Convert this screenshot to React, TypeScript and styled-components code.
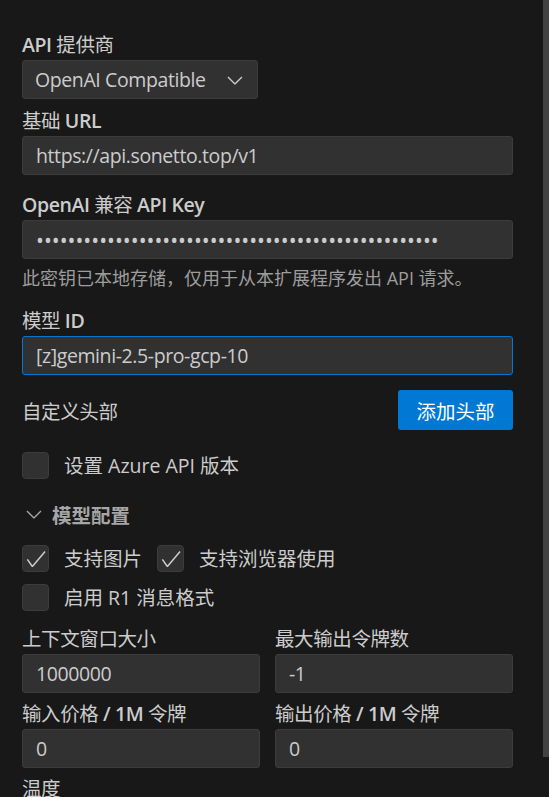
import React from "react";
import styled, { createGlobalStyle } from "styled-components";

// VS Code webview settings panel, dark modern theme at 150% zoom

const GlobalStyle = createGlobalStyle`
  html, body {
    margin: 0;
    background: #181818;
    overflow: hidden;
  }
  body {
    font-family: "Open Sans", "Noto Sans CJK SC", sans-serif;
    color: #cccccc;
  }
  * {
    box-sizing: border-box;
  }
`;

const Page = styled.div`
  position: relative;
  width: 549px;
  min-height: 797px;
  padding: 32px 36px 0 22px;
  font-size: 19.5px;
  letter-spacing: -0.4px;
`;

const ScrollThumb = styled.div`
  position: absolute;
  top: 0;
  right: 0;
  width: 6px;
  height: 757px;
  background: #424242;
`;

const Field = styled.div<{ $mb?: number }>`
  margin-bottom: ${(p) => p.$mb ?? 0}px;
`;

const Label = styled.label`
  display: block;
  font-size: 19.5px;
  line-height: 26px;
  font-weight: 600;
  margin-bottom: 2px;
  color: #cccccc;
  white-space: nowrap;
`;

const Han = styled.span`
  font-weight: 400;
`;

const TextInput = styled.input<{ $focused?: boolean }>`
  display: block;
  width: 100%;
  height: 39px;
  padding: 0 13px;
  background: #313131;
  border: 1px solid ${(p) => (p.$focused ? "#0078d4" : "#3c3c3c")};
  border-radius: 3px;
  color: #cccccc;
  font-family: inherit;
  font-size: 19.5px;
  letter-spacing: inherit;
  outline: none;
`;

const SecretInput = styled(TextInput)`
  font-size: 21px;
  letter-spacing: 0;
`;

const Select = styled.div`
  display: flex;
  align-items: center;
  justify-content: space-between;
  width: 236px;
  height: 39px;
  padding: 0 10px 0 12px;
  background: #313131;
  border: 1px solid #3c3c3c;
  border-radius: 3px;
  color: #cccccc;
`;

const Helper = styled.p`
  margin: 8px 0 19px;
  font-size: 18px;
  line-height: 22px;
  letter-spacing: 0;
  color: #9d9d9d;
  white-space: nowrap;
`;

const HeaderRow = styled.div`
  display: flex;
  align-items: center;
  justify-content: space-between;
  margin: 15px 0 22px;
`;

const PrimaryButton = styled.button`
  width: 115px;
  height: 40px;
  border: none;
  border-radius: 3px;
  background: #0078d4;
  color: #ffffff;
  font-family: inherit;
  font-size: 19.5px;
`;

const CheckRow = styled.div<{ $mb?: number }>`
  display: flex;
  align-items: center;
  margin-bottom: ${(p) => p.$mb ?? 0}px;
`;

const CheckItem = styled.label`
  display: flex;
  align-items: center;
  gap: 15px;
  margin-right: 15px;
  line-height: 27px;
  letter-spacing: 0;
  white-space: nowrap;
`;

const Box = styled.span`
  display: flex;
  align-items: center;
  justify-content: center;
  width: 27px;
  height: 27px;
  background: #313131;
  border: 1px solid #3c3c3c;
  border-radius: 4px;
  color: #cccccc;
`;

const SectionHeading = styled.div`
  display: flex;
  align-items: center;
  gap: 6px;
  height: 26px;
  margin-bottom: 18px;
  font-weight: 700;
  letter-spacing: 0;
  color: #a6a6a6;
`;

const Grid = styled.div`
  display: grid;
  grid-template-columns: 1fr 1fr;
  column-gap: 15px;
  row-gap: 8px;
  margin-top: 15px;
`;

const GridBottom = styled.div`
  margin-top: 8px;
`;

const Chevron = () => (
  <svg width="24" height="24" viewBox="0 0 16 16" fill="currentColor">
    <path d="M7.976 10.072l4.357-4.357.62.618L8.284 11h-.618L3 6.333l.619-.618 4.357 4.357z" />
  </svg>
);

const Check = () => (
  <svg width="24" height="24" viewBox="0 0 16 16" fill="currentColor">
    <path d="M14.431 3.323l-8.47 10-.79-.036-3.35-4.77.818-.574 2.978 4.24 8.051-9.506.764.646z" />
  </svg>
);

// chinese runs stay regular while latin parts of a label are semibold
const Mixed: React.FC<{ text: string }> = ({ text }) => {
  const parts = text.split(/([\u3000-\u303f\u4e00-\u9fff\uff00-\uffef]+)/);
  return (
    <>
      {parts.map((part, i) =>
        /[\u3000-\u303f\u4e00-\u9fff\uff00-\uffef]/.test(part) ? (
          <Han key={i}>{part}</Han>
        ) : (
          part
        )
      )}
    </>
  );
};

const Checkbox: React.FC<{ label: string; checked?: boolean }> = ({ label, checked }) => (
  <CheckItem>
    <Box>{checked && <Check />}</Box>
    {label}
  </CheckItem>
);

const App: React.FC = () => {
  return (
    <>
      <GlobalStyle />
      <Page>
        <Field $mb={9}>
          <Label>
            <Mixed text="API 提供商" />
          </Label>
          <Select>
            <span>OpenAI Compatible</span>
            <Chevron />
          </Select>
        </Field>

        <Field $mb={17}>
          <Label>
            <Mixed text="基础 URL" />
          </Label>
          <TextInput defaultValue="https://api.sonetto.top/v1" />
        </Field>

        <Field>
          <Label>
            <Mixed text="OpenAI 兼容 API Key" />
          </Label>
          <SecretInput type="password" defaultValue={"x".repeat(51)} />
        </Field>
        <Helper>此密钥已本地存储，仅用于从本扩展程序发出 API 请求。</Helper>

        <Field>
          <Label>
            <Mixed text="模型 ID" />
          </Label>
          <TextInput $focused defaultValue="[z]gemini-2.5-pro-gcp-10" />
        </Field>

        <HeaderRow>
          <span>自定义头部</span>
          <PrimaryButton>添加头部</PrimaryButton>
        </HeaderRow>

        <CheckRow $mb={22}>
          <Checkbox label="设置 Azure API 版本" />
        </CheckRow>

        <SectionHeading>
          <Chevron />
          模型配置
        </SectionHeading>

        <CheckRow $mb={12}>
          <Checkbox label="支持图片" checked />
          <Checkbox label="支持浏览器使用" checked />
        </CheckRow>
        <CheckRow>
          <Checkbox label="启用 R1 消息格式" />
        </CheckRow>

        <Grid>
          <Field>
            <Label>
              <Mixed text="上下文窗口大小" />
            </Label>
            <TextInput defaultValue="1000000" />
          </Field>
          <Field>
            <Label>
              <Mixed text="最大输出令牌数" />
            </Label>
            <TextInput defaultValue="-1" />
          </Field>
          <Field>
            <Label>
              <Mixed text="输入价格 / 1M 令牌" />
            </Label>
            <TextInput defaultValue="0" />
          </Field>
          <Field>
            <Label>
              <Mixed text="输出价格 / 1M 令牌" />
            </Label>
            <TextInput defaultValue="0" />
          </Field>
        </Grid>

        <GridBottom>
          <Label>
            <Mixed text="温度" />
          </Label>
        </GridBottom>

        <ScrollThumb />
      </Page>
    </>
  );
};

export default App;
